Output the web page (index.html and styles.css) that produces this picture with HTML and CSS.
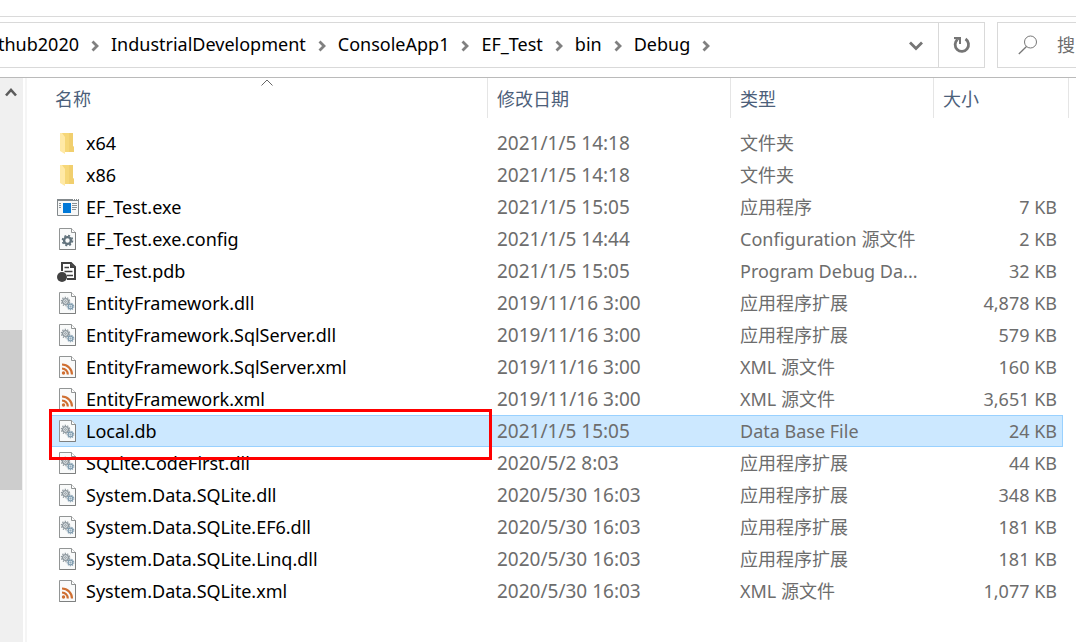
FILE: index.html
```html
<!DOCTYPE html>
<html lang="zh-CN">
<head>
<meta charset="utf-8">
<title>Debug</title>
<link rel="stylesheet" href="styles.css">
</head>
<body>
<svg class="defs" aria-hidden="true">
  <symbol id="sep" viewBox="0 0 8 12"><path d="M1.500 1.500 6 6l-4.500 4.500" fill="none" stroke="#808080" stroke-width="2.800"/></symbol>
  <symbol id="page" viewBox="0 0 22 22"><path d="M2.500.500h12l4 4v17h-16z" fill="#f9fafa" stroke="#929595"/><path d="M14.500.500v4h4" fill="#fff" stroke="#929595"/><path d="M18.500 4.500v17h-16" fill="none" stroke="#7e8080"/></symbol>
  <symbol id="folder" viewBox="0 0 22 22"><path d="M5 1h11v13l1 1v5H5z" fill="#f6d778"/><path d="M12 1h4v13l1 1v5h-5z" fill="#eec968" opacity=".6"/><path d="M3 1h2l3 4v17l-5-3z" fill="#ffe9a6"/></symbol>
  <symbol id="exe" viewBox="0 0 22 22"><path d="M.500 3.500h21v16H.500z" fill="#f7f8f8" stroke="#83898c"/><path d="M0 3h22v2H0z" fill="#83898c"/><path d="M16 3h1v1h-1zM18 3h1v1h-1zM20 3h1v1h-1z" fill="#fff"/><path d="M6 7h8v10H6z" fill="#0078d7"/><path d="M2 7.500h2M2 9.500h2M2 11.500h2M15 7.500h5M15 9.500h5M15 11.500h5M15 13.500h4" stroke="#8b9296"/></symbol>
  <symbol id="config" viewBox="0 0 22 22"><use href="#page"/><circle cx="10.500" cy="12.500" r="3.400" fill="none" stroke="#60717b" stroke-width="2.400"/><circle cx="10.500" cy="12.500" r="5" fill="none" stroke="#60717b" stroke-width="1.600" stroke-dasharray="2 1.927"/></symbol>
  <symbol id="pdb" viewBox="0 0 22 22"><path d="M5 11V3h9l4 4v12H10" fill="#fff" stroke="#424242" stroke-width="2"/><path d="M13 3v5h5z" fill="#424242"/><path d="M7.500 7.500H12M7.500 11.500h8M10 15.500h6" stroke="#424242" stroke-width="1.600"/><circle cx="5" cy="17" r="5" fill="#424242"/></symbol>
  <symbol id="dll" viewBox="0 0 22 22"><use href="#page"/><g fill="none" stroke="#8d979d"><circle cx="8.500" cy="9.500" r="2.900" stroke-width="1.400" fill="#e4e9ec"/><circle cx="8.500" cy="9.500" r=".900"/><circle cx="8.500" cy="9.500" r="4.100" stroke-width="1.300" stroke-dasharray="1.250 1.326"/></g><g fill="none" stroke="#7f9bae"><circle cx="13.500" cy="14.500" r="2.300" stroke-width="1.200" fill="#e6eef3"/><circle cx="13.500" cy="14.500" r=".600"/><circle cx="13.500" cy="14.500" r="3.300" stroke-width="1.100" stroke-dasharray="1.100 1.204"/></g></symbol>
  <symbol id="xml" viewBox="0 0 22 22"><use href="#page"/><circle cx="6.500" cy="17" r="1.700" fill="#cf6f32"/><path d="M5 12.500a6 6 0 0 1 5.800 6M5 8.500a10 10 0 0 1 10 10" fill="none" stroke="#cf6f32" stroke-width="2.200"/></symbol>
</svg>

<div class="explorer">
  <div class="ribbon-edge"></div>
  <header class="toolbar">
    <nav class="address">
      <ol class="crumbs">
        <li><button type="button">thub2020</button><svg class="sep"><use href="#sep"/></svg></li>
        <li><button type="button">IndustrialDevelopment</button><svg class="sep"><use href="#sep"/></svg></li>
        <li><button type="button">ConsoleApp1</button><svg class="sep"><use href="#sep"/></svg></li>
        <li><button type="button">EF_Test</button><svg class="sep"><use href="#sep"/></svg></li>
        <li><button type="button">bin</button><svg class="sep"><use href="#sep"/></svg></li>
        <li><button type="button">Debug</button><svg class="sep"><use href="#sep"/></svg></li>
      </ol>
      <button class="history" type="button" aria-label="历史记录"><svg width="14" height="10" viewBox="0 0 14 10"><path d="M1 1.500 7 7.500l6-6" fill="none" stroke="#757575" stroke-width="2.800"/></svg></button>
      <button class="refresh" type="button" aria-label="刷新"><svg width="18" height="18" viewBox="0 0 18 18"><path d="M12.500 3A6.700 6.700 0 1 1 4.500 3.500" fill="none" stroke="#757575" stroke-width="2.800"/><path d="M1 1h7v7H6V4L1 3z" fill="#757575"/></svg></button>
    </nav>
    <label class="search">
      <svg width="20" height="20" viewBox="0 0 20 20"><circle cx="12.500" cy="7" r="6" fill="none" stroke="#777"/><path d="M8.500 11.500.800 19" stroke="#777" stroke-width="1.300"/></svg>
      <input type="text" placeholder="搜" aria-label="搜">
    </label>
  </header>

  <div class="content">
    <div class="scrollbar">
      <button type="button" aria-label="向上滚动"><svg width="12" height="10" viewBox="0 0 12 10"><path d="M1 8.500 6 3l5 5.500" fill="none" stroke="#5c5c5c" stroke-width="2.600"/></svg></button>
      <div class="thumb"></div>
    </div>
    <main class="pane">
      <table class="files">
        <colgroup><col><col class="c-date"><col class="c-type"><col class="c-size"></colgroup>
        <thead>
          <tr>
            <th class="sorted"><button type="button">名称</button><svg class="sort" width="12" height="7" viewBox="0 0 12 7"><path d="M.500 6.500 6 1l5.500 5.500" fill="none" stroke="#666"/></svg></th>
            <th><button type="button">修改日期</button></th>
            <th><button type="button">类型</button></th>
            <th><button type="button">大小</button></th>
          </tr>
        </thead>
        <tbody>
          <tr><td><div class="name"><svg><use href="#folder"/></svg>x64</div></td><td>2021/1/5 14:18</td><td>文件夹</td><td></td></tr>
          <tr><td><div class="name"><svg><use href="#folder"/></svg>x86</div></td><td>2021/1/5 14:18</td><td>文件夹</td><td></td></tr>
          <tr><td><div class="name"><svg><use href="#exe"/></svg>EF_Test.exe</div></td><td>2021/1/5 15:05</td><td>应用程序</td><td>7 KB</td></tr>
          <tr><td><div class="name"><svg><use href="#config"/></svg>EF_Test.exe.config</div></td><td>2021/1/5 14:44</td><td>Configuration 源文件</td><td>2 KB</td></tr>
          <tr><td><div class="name"><svg><use href="#pdb"/></svg>EF_Test.pdb</div></td><td>2021/1/5 15:05</td><td>Program Debug Da...</td><td>32 KB</td></tr>
          <tr><td><div class="name"><svg><use href="#dll"/></svg>EntityFramework.dll</div></td><td>2019/11/16 3:00</td><td>应用程序扩展</td><td>4,878 KB</td></tr>
          <tr><td><div class="name"><svg><use href="#dll"/></svg>EntityFramework.SqlServer.dll</div></td><td>2019/11/16 3:00</td><td>应用程序扩展</td><td>579 KB</td></tr>
          <tr><td><div class="name"><svg><use href="#xml"/></svg>EntityFramework.SqlServer.xml</div></td><td>2019/11/16 3:00</td><td>XML 源文件</td><td>160 KB</td></tr>
          <tr><td><div class="name"><svg><use href="#xml"/></svg>EntityFramework.xml</div></td><td>2019/11/16 3:00</td><td>XML 源文件</td><td>3,651 KB</td></tr>
          <tr class="selected"><td><div class="name"><svg><use href="#dll"/></svg>Local.db</div><span class="marker"></span></td><td>2021/1/5 15:05</td><td>Data Base File</td><td>24 KB</td></tr>
          <tr><td><div class="name"><svg><use href="#dll"/></svg>SQLite.CodeFirst.dll</div></td><td>2020/5/2 8:03</td><td>应用程序扩展</td><td>44 KB</td></tr>
          <tr><td><div class="name"><svg><use href="#dll"/></svg>System.Data.SQLite.dll</div></td><td>2020/5/30 16:03</td><td>应用程序扩展</td><td>348 KB</td></tr>
          <tr><td><div class="name"><svg><use href="#dll"/></svg>System.Data.SQLite.EF6.dll</div></td><td>2020/5/30 16:03</td><td>应用程序扩展</td><td>181 KB</td></tr>
          <tr><td><div class="name"><svg><use href="#dll"/></svg>System.Data.SQLite.Linq.dll</div></td><td>2020/5/30 16:03</td><td>应用程序扩展</td><td>181 KB</td></tr>
          <tr><td><div class="name"><svg><use href="#xml"/></svg>System.Data.SQLite.xml</div></td><td>2020/5/30 16:03</td><td>XML 源文件</td><td>1,077 KB</td></tr>
        </tbody>
      </table>
    </main>
  </div>
</div>
</body>
</html>
```
FILE: styles.css
```css
* { box-sizing: border-box; }
body {
  margin: 0;
  background: #fff;
  color: #000;
  font: 18px/24px "Noto Sans", "Noto Sans CJK SC", sans-serif;
}
button {
  margin: 0;
  padding: 0;
  border: 0;
  background: none;
  color: inherit;
  font: inherit;
}
svg { display: block; flex: none; }
.defs { position: absolute; width: 0; height: 0; }

.explorer {
  display: flex;
  flex-direction: column;
  min-height: 100vh;
  overflow: hidden;
}
.ribbon-edge { height: 17px; border-bottom: 1px solid #dadada; }

.toolbar {
  display: flex;
  gap: 12px;
  padding: 5px 0 9px;
  border-bottom: 1px solid #bababa;
}
.address {
  display: flex;
  flex: 1;
  height: 46px;
  min-width: 0;
  border: 1px solid #d9d9d9;
  border-left: 0;
}
.crumbs {
  display: flex;
  flex: 1;
  align-items: center;
  margin: 0 0 0 -2px;
  padding: 0 0 2px;
  list-style: none;
}
.crumbs li { display: flex; align-items: center; }
.sep { width: 8px; height: 12px; margin: 3px 12px 0; }
.history, .refresh {
  display: flex;
  align-items: center;
  justify-content: center;
  width: 46px;
}
.history { width: 44px; padding-top: 2px; }
.refresh { border-left: 1px solid #d9d9d9; }
.search {
  display: flex;
  align-items: center;
  gap: 19px;
  width: 79px;
  padding-left: 20px;
  border: 1px solid #d9d9d9;
  border-right: 0;
}
.search input {
  flex: 1;
  min-width: 0;
  padding: 0;
  border: 0;
  outline: 0;
  background: none;
  font: inherit;
}
.search input::placeholder { color: #6d6d6d; opacity: 1; }

.content { display: flex; flex: 1; }
.scrollbar {
  display: flex;
  flex-direction: column;
  width: 23px;
  background: #f0f0f0;
}
.scrollbar button { padding: 9px 0 1px 5px; }
.thumb {
  width: 22px;
  height: 160px;
  margin-top: 232px;
  background: #cdcdcd;
}
.pane {
  flex: 1;
  min-width: 0;
  margin-left: 2px;
  padding: 0 7px 0 25px;
  border-left: 2px solid #f5f5f5;
}

.files {
  width: 100%;
  table-layout: fixed;
  border-collapse: separate;
  border-spacing: 0;
}
.c-date { width: 243px; }
.c-type { width: 203px; }
.c-size { width: 135px; }
.files th {
  height: 40px;
  padding: 1px 0 0 9px;
  border-right: 1px solid #e5e5e5;
  color: #4c607a;
  font-weight: 400;
  text-align: left;
}
.files th:first-child { padding-left: 3px; }
.sorted { position: relative; }
.sort { position: absolute; top: 1px; left: 209px; }
.files thead::after { content: ""; display: block; height: 9px; }
.files td {
  height: 32px;
  padding: 0 0 0 9px;
  color: #6d6d6d;
  white-space: nowrap;
}
.files td:first-child { padding-left: 5px; color: #000; }
.files td:nth-child(2) { font-size: 19px; }
.files td:last-child {
  padding-right: 6px;
  border-right: 6px solid transparent;
  background-clip: padding-box;
  text-align: right;
}
.name { display: flex; align-items: center; gap: 7px; }
.name svg { width: 22px; height: 22px; }

.selected td {
  background: #cce8ff;
  box-shadow: inset 0 1px #99d1ff, inset 0 -1px #99d1ff;
}
.selected td:last-child { box-shadow: inset 0 1px #99d1ff, inset -1px -1px #99d1ff; }
.selected td:first-child { position: relative; }
.marker {
  position: absolute;
  z-index: 1;
  inset: -6px -4px -13px -3px;
  border: 3px solid #f00;
}
```
